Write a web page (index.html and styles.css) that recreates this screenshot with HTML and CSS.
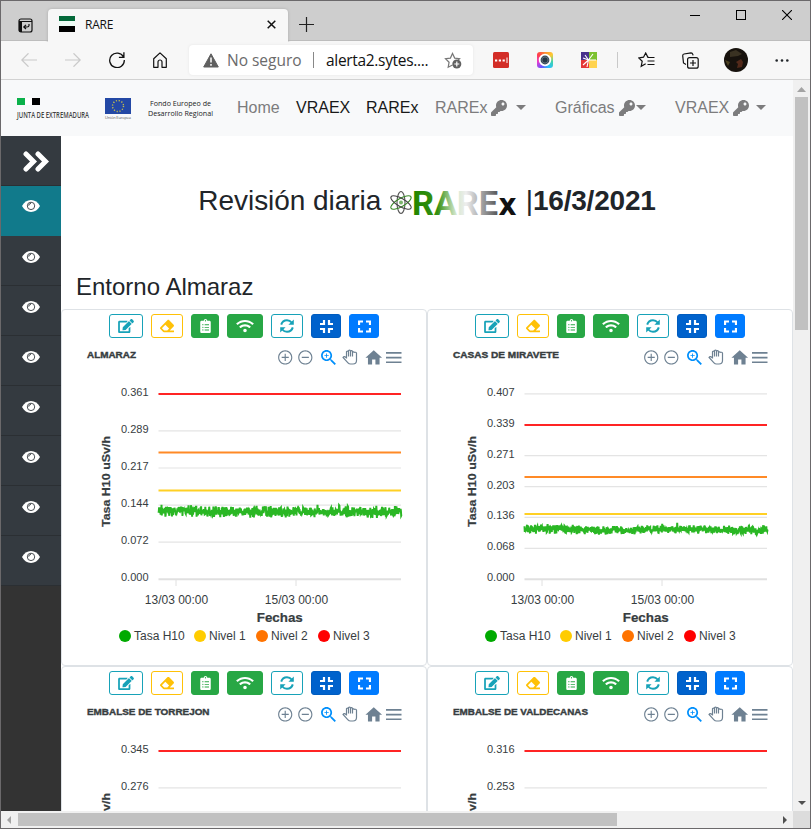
FILE: index.html
```html
<!DOCTYPE html>
<html lang="es">
<head>
<meta charset="utf-8">
<title>RARE</title>
<link rel="stylesheet" href="styles.css">
</head>
<body>
<svg class="defs" aria-hidden="true">
  <symbol id="key" viewBox="0 0 512 512"><path d="M512 176.001C512 273.203 433.202 352 336 352c-11.22 0-22.19-1.062-32.827-3.069l-24.012 27.014A23.999 23.999 0 0 1 261.223 384H224v40c0 13.255-10.745 24-24 24h-40v40c0 13.255-10.745 24-24 24H24c-13.255 0-24-10.745-24-24v-78.059c0-6.365 2.529-12.47 7.029-16.971l161.802-161.802C163.108 213.814 160 195.271 160 176 160 78.798 238.797.001 335.999 0 433.488-.001 512 78.511 512 176.001zM336 128c0 26.51 21.49 48 48 48s48-21.49 48-48-21.49-48-48-48-48 21.49-48 48z"/></symbol>
  <symbol id="eye" viewBox="0 0 18 12"><path d="M0 6C2 2.2 5.3 0 9 0s7 2.2 9 6c-2 3.800-5.300 6-9 6S2 9.800 0 6z"/><circle cx="9" cy="5.900" r="3.700" fill="none" class="iris"/><path d="M6.700 5.700A2.300 2.300 0 0 1 9 3.400" fill="none" class="iris"/></symbol>
  <symbol id="edit" viewBox="0 0 576 512"><path d="M402.6 83.2l90.2 90.2c3.8 3.8 3.8 10 0 13.8L274.4 405.6l-92.8 10.3c-12.4 1.4-22.9-9.1-21.5-21.5l10.3-92.8L388.8 83.2c3.8-3.8 10-3.8 13.8 0zm162-22.9l-48.8-48.8c-15.2-15.2-39.9-15.2-55.2 0l-35.4 35.4c-3.8 3.8-3.8 10 0 13.8l90.2 90.2c3.8 3.8 10 3.8 13.8 0l35.4-35.4c15.2-15.3 15.2-40 0-55.2zM384 346.2V448H64V128h229.8c3.2 0 6.2-1.3 8.500-3.500l40-40c7.600-7.600 2.200-20.500-8.500-20.500H48C21.500 64 0 85.500 0 112v352c0 26.500 21.500 48 48 48h352c26.500 0 48-21.500 48-48V306.200c0-10.700-12.900-16-20.500-8.500l-40 40c-2.200 2.300-3.500 5.300-3.500 8.500z"/></symbol>
  <symbol id="eraser" viewBox="0 0 512 512"><path d="M497.941 273.941c18.745-18.745 18.745-49.137 0-67.882l-160-160c-18.745-18.745-49.136-18.746-67.883 0l-256 256c-18.745 18.745-18.745 49.137 0 67.882l96 96A48.004 48.004 0 0 0 144 480h356c6.627 0 12-5.373 12-12v-40c0-6.627-5.373-12-12-12H355.883l142.058-142.059zm-302.627-62.627l137.373 137.373L265.373 416H150.628l-80-80 124.686-124.686z"/></symbol>
  <symbol id="clip" viewBox="0 0 384 512"><path d="M336 64h-80c0-35.3-28.7-64-64-64s-64 28.700-64 64H48C21.500 64 0 85.500 0 112v352c0 26.500 21.500 48 48 48h288c26.500 0 48-21.500 48-48V112c0-26.500-21.500-48-48-48zM96 424c-13.300 0-24-10.700-24-24s10.700-24 24-24 24 10.700 24 24-10.700 24-24 24zm0-96c-13.300 0-24-10.700-24-24s10.700-24 24-24 24 10.700 24 24-10.700 24-24 24zm0-96c-13.300 0-24-10.700-24-24s10.700-24 24-24 24 10.700 24 24-10.700 24-24 24zm96-192c13.300 0 24 10.700 24 24s-10.700 24-24 24-24-10.700-24-24 10.700-24 24-24zm128 368c0 4.400-3.600 8-8 8H168c-4.400 0-8-3.600-8-8v-16c0-4.400 3.600-8 8-8h144c4.400 0 8 3.600 8 8v16zm0-96c0 4.400-3.600 8-8 8H168c-4.400 0-8-3.600-8-8v-16c0-4.400 3.600-8 8-8h144c4.400 0 8 3.600 8 8v16zm0-96c0 4.400-3.600 8-8 8H168c-4.400 0-8-3.600-8-8v-16c0-4.400 3.600-8 8-8h144c4.400 0 8 3.600 8 8v16z"/></symbol>
  <symbol id="wifi" viewBox="0 0 640 512"><path d="M634.91 154.88C457.74-8.99 182.19-8.93 5.09 154.88c-6.66 6.16-6.79 16.59-.35 22.98l34.24 33.97c6.14 6.1 16.02 6.23 22.4.38 145.92-133.68 371.3-133.71 517.25 0 6.38 5.85 16.26 5.71 22.4-.38l34.24-33.97c6.43-6.39 6.3-16.82-.36-22.98zM320 352c-35.35 0-64 28.65-64 64s28.65 64 64 64 64-28.65 64-64-28.65-64-64-64zm202.67-83.59c-115.26-101.93-290.21-101.82-405.34 0-6.9 6.1-7.12 16.69-.57 23.15l34.44 33.99c6 5.92 15.66 6.32 22.05.8 83.95-72.57 209.74-72.41 293.49 0 6.39 5.52 16.05 5.13 22.05-.8l34.44-33.99c6.56-6.46 6.33-17.06-.56-23.15z"/></symbol>
  <symbol id="sync" viewBox="0 0 14 14"><path d="M1.200 5.600C2 2.900 4.300 1.200 7 1.200c2 0 3.500.8 4.700 2.300M12.800 8.400C12 11.100 9.700 12.800 7 12.800c-2 0-3.500-.8-4.700-2.300" fill="none" stroke="currentColor" stroke-width="2"/><path d="M13.800.4v5.400H8.400zM.2 13.600V8.200h5.400z"/></symbol>
  <symbol id="compress" viewBox="0 0 13 13"><path d="M4 0v4H0M9 0v4h4M4 13V9H0M9 13V9h4" fill="none" stroke="currentColor" stroke-width="2.200"/></symbol>
  <symbol id="expand" viewBox="0 0 13 13"><path d="M1 5V1.500h4M8 1.500h4V5M1 8v3.500h4M12 8v3.500H8" fill="none" stroke="currentColor" stroke-width="2.200"/></symbol>
</svg>

<div class="window">
  <header class="titlebar">
    <div class="tabactions"><svg width="15" height="15" viewBox="0 0 15 15"><rect x="1" y="1" width="13" height="13" rx="2" fill="none" stroke="#111" stroke-width="1.200"/><path d="M1 3.500h13" stroke="#111" fill="none"/><path d="M1 3h3v11H2L1 13z" fill="#111"/><path d="M11 6v1.500Q11 9 9 9H6M8 6.800L5.800 9 8 11" fill="none" stroke="#111" stroke-width="1.200"/></svg></div>
    <div class="tab">
      <span class="favicon"></span><span class="tabname">RARE</span>
      <svg width="9" height="9" viewBox="0 0 9 9"><path d="M.7.7l7.600 7.600M8.300.7L.7 8.300" stroke="#111" stroke-width="1.500"/></svg>
    </div>
    <svg class="newtab" width="15" height="15" viewBox="0 0 15 15"><path d="M7.500 0v15M0 7.500h15" stroke="#222" stroke-width="1.200"/></svg>
    <div class="winctl">
      <svg width="10" height="10"><path d="M0 5.500h10" stroke="#000"/></svg>
      <svg width="10" height="10"><rect x=".5" y=".5" width="9" height="9" fill="none" stroke="#000"/></svg>
      <svg width="10" height="10"><path d="M0 0l10 10M10 0L0 10" stroke="#000" stroke-width="1.100"/></svg>
    </div>
  </header>

  <div class="toolbar">
    <div class="navicons">
      <svg width="16" height="14" viewBox="0 0 16 14" stroke="#c9c9c9"><path d="M16 7H.8M7.500.3L.8 7l6.700 6.700" fill="none" stroke-width="1.200"/></svg>
      <svg width="16" height="14" viewBox="0 0 16 14" stroke="#c9c9c9"><path d="M0 7h15.200M8.500.3L15.200 7l-6.700 6.700" fill="none" stroke-width="1.200"/></svg>
      <svg width="16" height="16" viewBox="0 0 16 16"><path d="M14.500 5A7.300 7.300 0 1 0 15.300 8M14.900.3v5h-5" fill="none" stroke="#111" stroke-width="1.300"/></svg>
      <svg width="14" height="16" viewBox="0 0 14 16"><path d="M.7 6.800L7 .9l6.300 5.900v8.500H9V10a2 2 0 0 0-4 0v5.300H.7z" fill="none" stroke="#111" stroke-width="1.200" stroke-linejoin="round"/></svg>
    </div>
    <div class="address">
      <svg width="16" height="15" viewBox="0 0 16 15"><path d="M8 .8L15.300 14H.7z" fill="#606060" stroke="#606060" stroke-linejoin="round"/><path d="M8 4.500v5M8 11v1.700" stroke="#fff" stroke-width="1.500"/></svg>
      <span class="nosec">No seguro</span><span class="vbar"></span><span class="url">alerta2.sytes....</span>
      <svg class="fav" width="18" height="17" viewBox="0 0 18 17"><path d="M8.500 13L4.200 15.200l.9-5L1.500 6.700l4.900-.6L8.500 1.500l2.200 4.600 4.900.6-1.500 1.500" fill="none" stroke="#777" stroke-width="1.200"/><circle cx="12.800" cy="12" r="4.500" fill="#606060"/><path d="M12.800 9.500v5M10.300 12h5" stroke="#fff" stroke-width="1.200"/></svg>
    </div>
    <svg class="ext" width="16" height="16"><rect width="16" height="16" rx="1.500" fill="#d32d27"/><path d="M2 8.500h2.200M5.800 8.500H8M9.600 8.500h2.200" stroke="#fff" stroke-width="2.200"/><path d="M14 5.500v5.500" stroke="#fff"/></svg>
    <div class="ext rainbow"><svg width="16" height="16"><circle cx="8" cy="8" r="5.300" fill="#394a59" stroke="#fff" stroke-width="1.800"/><circle cx="8" cy="8" r="3" fill="#263746" stroke="#71808c" stroke-width=".7"/></svg></div>
    <svg class="ext" width="16" height="16"><path d="M0 0h8v8H0z" fill="#47308b"/><path d="M8 0h8v8H8z" fill="#7cc230"/><path d="M0 8h8v8H0z" fill="#e53837"/><path d="M8 8h8v8H8z" fill="#ffd34f"/><path d="M7.500 8L2 6M7.500 8L4 3M7.500 8L12 2M7.500 8H15M7.500 8L6 15M7.500 8L2 13" stroke="#fff" stroke-width="1.100"/></svg>
    <span class="sep"></span>
    <svg class="favs" width="17" height="16" viewBox="0 0 17 16"><path d="M10.500 5.200L9.800 5.100 7.700 1 5.500 5.200l-4.700.7 3.400 3.400-1 5 4.500-2.500M9.500 5.500h7M9.500 9h7M9.500 12.500h7" fill="none" stroke="#111" stroke-width="1.200"/></svg>
    <svg class="coll" width="17" height="17" viewBox="0 0 17 17"><path d="M4 12.500L1.500 11 .7 3.700Q.7 2.200 2 2L9 .8q1.400 0 1.800 1.500l.3 1" fill="none" stroke="#111" stroke-width="1.200"/><rect x="5.600" y="5.600" width="10.600" height="10.600" rx="2" fill="none" stroke="#111" stroke-width="1.200"/><path d="M11 8v6M8 11h6" stroke="#111" stroke-width="1.200"/></svg>
    <svg class="avatar" width="24" height="24" viewBox="0 0 24 24"><defs><clipPath id="av"><circle cx="12" cy="12" r="12"/></clipPath></defs><g clip-path="url(#av)"><path d="M0 0h24v24H0z" fill="#17120d"/><path d="M6 4l6-2 6 4-4 2-8 1z" fill="#3a3222"/><path d="M12 14l5-3 2 3-1 5-5 1 1-4z" fill="#52291a"/><path d="M1 12l5 2-2 4z" fill="#4b4020"/></g></svg>
    <svg class="more" width="14" height="3"><circle cx="1.700" cy="1.500" r="1.300"/><circle cx="7" cy="1.500" r="1.300"/><circle cx="12.300" cy="1.500" r="1.300"/></svg>
  </div>

  <div class="viewport">
    <div class="page">
      <nav class="navbar">
        <svg class="brand" width="215" height="56" viewBox="0 0 215 56">
          <path d="M16 18h8v7h-8z" fill="#0bb14a"/><path d="M31 18h8v7h-8z" fill="#000"/><path d="M24 18h7v7h-7z" fill="#fff"/>
          <text x="16" y="38" font-family="Open Sans" font-size="9" font-weight="600" fill="#444" textLength="72" lengthAdjust="spacingAndGlyphs">JUNTA DE EXTREMADURA</text>
          <path d="M104 18h26v16h-26z" fill="#2348a5"/>
          <circle cx="117" cy="26" r="5.500" fill="none" stroke="#c5bd4d" stroke-width="1.400" stroke-dasharray="1.200 1.680"/>
          <text x="104" y="38.500" font-family="Open Sans" font-size="4" fill="#555" textLength="26">Unión Europea</text>
          <text x="149" y="26" font-family="Open Sans" font-size="7.500" fill="#222" textLength="61" lengthAdjust="spacingAndGlyphs">Fondo Europeo de</text>
          <text x="147" y="35.500" font-family="Open Sans" font-size="7.500" fill="#222" textLength="65" lengthAdjust="spacingAndGlyphs">Desarrollo Regional</text>
        </svg>
        <span class="link home">Home</span>
        <span class="link on vraex">VRAEX</span>
        <span class="link on rarex">RAREx</span>
        <span class="link drop d1">RAREx <svg width="16" height="16"><use href="#key"/></svg><i></i></span>
        <span class="link drop d2">Gráficas <svg width="16" height="16"><use href="#key"/></svg><i></i></span>
        <span class="link drop d3">VRAEX <svg width="16" height="16"><use href="#key"/></svg><i></i></span>
      </nav>
      <div class="body">
        <aside class="side">
          <div class="item toggle"><svg width="27" height="21" viewBox="0 0 27 21"><path d="M3 3l7.500 7.500L3 18M15 3l7.500 7.500L15 18" fill="none" stroke="#fff" stroke-width="5" stroke-linecap="round" stroke-linejoin="miter"/></svg></div>
          <div class="item active"><svg width="18" height="12"><use href="#eye"/></svg></div>
          <div class="item"><svg width="18" height="12"><use href="#eye"/></svg></div>
          <div class="item"><svg width="18" height="12"><use href="#eye"/></svg></div>
          <div class="item"><svg width="18" height="12"><use href="#eye"/></svg></div>
          <div class="item"><svg width="18" height="12"><use href="#eye"/></svg></div>
          <div class="item"><svg width="18" height="12"><use href="#eye"/></svg></div>
          <div class="item"><svg width="18" height="12"><use href="#eye"/></svg></div>
          <div class="item"><svg width="18" height="12"><use href="#eye"/></svg></div>
        </aside>
        <main class="main">
          <h1>Revisión diaria
            <svg class="logo" width="129" height="26" viewBox="0 0 129 26">
              <defs><linearGradient id="rg" gradientUnits="userSpaceOnUse" x1="25" x2="109" y1="0" y2="0"><stop offset="0" stop-color="#238600"/><stop offset=".28" stop-color="#349014"/><stop offset=".5" stop-color="#d5e8cf"/><stop offset=".62" stop-color="#eee"/><stop offset="1" stop-color="#555"/></linearGradient></defs>
              <g fill="none" stroke-width="1.100"><ellipse cx="12" cy="12.500" rx="4" ry="11" stroke="#555"/><ellipse cx="12" cy="12.500" rx="4" ry="11.500" transform="rotate(60 12 12.500)" stroke="#3a8a28"/><ellipse cx="12" cy="12.500" rx="4" ry="11.500" transform="rotate(-60 12 12.500)" stroke="#444"/></g><circle cx="12" cy="12.500" r="2" fill="#7ab56c"/>
              <text x="23" y="25" font-family="Roboto" font-size="32.500" font-weight="bold" fill="url(#rg)" textLength="86" lengthAdjust="spacingAndGlyphs">RARE</text>
              <text x="109.500" y="25" font-family="DejaVu Sans" font-size="30" font-weight="bold" fill="#111" textLength="18" lengthAdjust="spacingAndGlyphs">x</text>
            </svg>
            |<b>16/3/2021</b></h1>
          <h2>Entorno Almaraz</h2>
          <div class="cards" id="cards"></div>
        </main>
      </div>
    </div>
    <div class="vscroll"><svg width="9" height="5"><path d="M0 5l4.500-5L9 5z" fill="#a3a3a3"/></svg><span></span><svg width="8" height="4"><path d="M0 0l4 4 4-4z" fill="#505050"/></svg></div>
  </div>
  <div class="hscroll"><svg width="4" height="8"><path d="M4 0L0 4l4 4z" fill="#a3a3a3"/></svg><span></span><svg width="4" height="8"><path d="M0 0l4 4-4 4z" fill="#505050"/></svg><em></em></div>
</div>
<script src="charts.js"></script>
</body>
</html>
```
FILE: styles.css
```css
* { box-sizing: border-box; }
body { margin: 0; font-family: "Liberation Sans", Arial, sans-serif; color: #212529; overflow: hidden; }
svg { display: block; flex: none; fill: currentColor; }
.defs { display: none; }
.window { width: 811px; height: 829px; border: 1px solid #6b696b; display: flex; flex-direction: column; overflow: hidden; }

.titlebar { height: 40px; flex: none; background: #cecece; display: flex; align-items: flex-start; border-bottom: 1px solid #bdbdbd; }
.tabactions { width: 47px; padding: 17px 0 0 17px; }
.tab { width: 240px; height: 40px; margin-top: 8px; padding: 0 12px 10px 11px; background: #f7f7f7; border-radius: 4px 4px 0 0; box-shadow: 0 0 3px #aaa; display: flex; align-items: center; clip-path: inset(-4px -4px 7px -4px); }
.favicon { width: 16px; height: 16px; background: linear-gradient(#04693a 0 5px, #edfbf5 5px 10px, #000 10px); }
.tabname { margin-left: 10px; flex: 1; font: 12px "Open Sans", sans-serif; letter-spacing: -.2px; color: #111; }
.newtab { margin: 16px 0 0 11px; }
.winctl { margin-left: auto; display: flex; gap: 36px; padding: 9px 18px 0 0; }

.toolbar { height: 39px; flex: none; background: #f7f7f7; border-bottom: 1px solid #d2d2d2; display: flex; align-items: center; }
.navicons { display: flex; align-items: center; width: 188px; padding-left: 20px; gap: 28px; }
.address { width: 284px; height: 30px; background: #fff; border-radius: 4px; box-shadow: 0 0 3px #e5e5e5; display: flex; align-items: center; padding-left: 14px; font: 15.500px "Open Sans", sans-serif; white-space: nowrap; }
.nosec { color: #6b6b6b; margin-left: 8px; width: 74px; letter-spacing: -.02px; }
.vbar { width: 1px; height: 16px; background: #888; margin: 0 12px; }
.url { color: #111; width: 104px; letter-spacing: -.32px; }
.fav { margin-left: 14px; }
.ext { margin-left: 28px; flex: none; }
.address + .ext { margin-left: 20px; }
.rainbow { border-radius: 3px; background: conic-gradient(#ff8a30, #ffc933, #41d3aa, #27bfff, #6954ff, #ec3ccb, #ff3f49, #ff8a30); }
.sep { width: 1px; height: 16px; background: #c9c9c9; margin: 0 20px; }
.coll { margin-left: 27px; }
.avatar { margin-left: 25px; }
.more { margin-left: 27px; }

.viewport { display: flex; height: 731px; flex: none; }
.page { width: 792px; height: 731px; overflow: hidden; background: #fff; }
.navbar { height: 56px; background: #f8f9fa; display: flex; align-items: center; font-size: 16px; color: #7c7c7d; white-space: nowrap; }
.brand { margin-right: 21px; }
.link { line-height: 24px; margin-top: -1px; }
.home { width: 59px; }
.vraex { width: 70px; }
.rarex { width: 69px; }
.on { color: #191919; }
.drop { display: flex; align-items: center; }
.drop svg { margin-left: 4px; }
.drop i { border: 5px solid transparent; border-top-color: #7c7c7d; border-bottom: 0; margin-left: 9px; }
.d1 { width: 120px; }
.d2 { width: 120px; }
.d2 i { margin-left: 1px; }
.d3 i { margin-left: 7px; }

.body { display: flex; height: 675px; }
.side { width: 60px; flex: none; background: #333; color: #fff; }
.item { height: 50px; background: #343a40; border-bottom: 1px solid #2b2f33; padding: 15px 0 0 21px; }
.toggle svg { margin-left: 1px; }
.active { background: #117a8b; border-color: #117a8b; padding-top: 14px; }
.iris { stroke: #343a40; stroke-width: .9; }
.active .iris { stroke: #117a8b; }
.main { width: 732px; flex: none; }
h1 { margin: 48px 0 0; height: 34px; line-height: 34px; font-size: 28px; font-weight: 400; text-align: center; white-space: nowrap; letter-spacing: -.05px; }
h1 b { letter-spacing: -.2px; }
.logo { display: inline-block; vertical-align: -6px; }
h2 { margin: 54px 0 0 15px; height: 37px; line-height: 29px; font-size: 24px; font-weight: 400; }
.cards { display: grid; grid-template-columns: 366px 366px; grid-auto-rows: 357px; }
.card { border: 1px solid #dee2e6; border-radius: 4px; padding-top: 4px; }
.buttons { display: flex; justify-content: center; gap: 8px; height: 24px; }
.btn { height: 24px; border-radius: 3px; border: 1px solid; display: flex; align-items: center; justify-content: center; }
.edit, .sync { color: #17a2b8; }
.edit { width: 34px; }
.sync { width: 32px; }
.eraser { width: 32px; color: #ffc107; }
.clip, .wifi { background: #28a745; border-color: #28a745; color: #fff; }
.clip { width: 28px; }
.wifi { width: 36px; }
.compress { width: 30px; background: #0062cc; border-color: #005cbf; color: #fff; }
.expand { width: 30px; background: #007bff; border-color: #007bff; color: #fff; }

.chart { font-family: "Liberation Sans", Arial, sans-serif; fill: #373d3f; }
.title { font-size: 9.500px; font-weight: 900; stroke: #373d3f; stroke-width: .4; }
.ylab { font-size: 11px; text-anchor: end; }
.xlab { font-size: 12px; text-anchor: middle; }
.axis { font-size: 12px; font-weight: 900; text-anchor: middle; stroke: #373d3f; stroke-width: .2; }
.rot { font-size: 11px; }
.leg { font-size: 12px; }
.grid { stroke: #e4e4e4; stroke-width: 1.200; }
.base { stroke: #e0e0e0; stroke-width: 2; }
.tools { fill: #6e8192; }
.tools .sel { fill: #008ffb; }

.vscroll { width: 17px; background: #f0f0f0; display: flex; flex-direction: column; align-items: center; padding: 7px 0 6px; }
.vscroll span { width: 13px; height: 233px; margin: 5px 0 auto; background: #c1c1c1; }
.hscroll { height: 17px; flex: none; background: #f0f0f0; display: flex; align-items: center; padding-left: 6px; }
.hscroll span { width: 599px; height: 13px; background: #c1c1c1; margin: 0 auto 0 7px; }
.hscroll em { width: 17px; height: 17px; background: #dcdcdc; margin-left: 6px; }
```
FILE: charts.js
```js
const stations = [
  { name: "ALMARAZ", w: 49, labels: ["0.361", "0.289", "0.217", "0.144", "0.072", "0.000"], red: 394, orange: 452.5, yellow: 490.5, green: 511.5, amp: 6.5 },
  { name: "CASAS DE MIRAVETE", w: 106, labels: ["0.407", "0.339", "0.271", "0.203", "0.136", "0.068", "0.000"], red: 425, orange: 477, yellow: 514, green: 529.5, amp: 5 },
  { name: "EMBALSE DE TORREJON", w: 122.5, labels: ["0.345", "0.276", "0.207", "0.138", "0.069", "0.000"], red: 394, orange: 458, yellow: 494, green: 511.5, amp: 6 },
  { name: "EMBALSE DE VALDECANAS", w: 135, labels: ["0.316", "0.253", "0.190", "0.126", "0.063", "0.000"], red: 394, orange: 458, yellow: 494, green: 511.5, amp: 6 }
];

const ring = "M12 2C6.480 2 2 6.480 2 12s4.480 10 10 10 10-4.480 10-10S17.520 2 12 2zm0 18.400c-4.600 0-8.400-3.800-8.400-8.400S7.400 3.600 12 3.600s8.400 3.800 8.400 8.400-3.800 8.400-8.400 8.400z";

const tools = `<g class="tools">
  <g transform="translate(276.700 348.900) scale(.71)"><path d="${ring}M12.800 7h-1.600v4.200H7v1.600h4.200V17h1.600v-4.200H17v-1.600h-4.200z"/></g>
  <g transform="translate(296.800 348.900) scale(.71)"><path d="${ring}M7 11.200h10v1.600H7z"/></g>
  <g class="sel" transform="translate(318.500 347.500) scale(.85)"><path d="M15.500 14h-.79l-.28-.27C15.410 12.590 16 11.110 16 9.500 16 5.910 13.090 3 9.500 3S3 5.910 3 9.500 5.910 16 9.500 16c1.610 0 3.090-.59 4.230-1.570l.27.28v.79l5 4.990L20.490 19l-4.990-5zm-6 0C7.010 14 5 11.990 5 9.500S7.010 5 9.500 5 14 7.010 14 9.500 11.990 14 9.500 14z"/><path d="M12 10h-2v2H9v-2H7V9h2V7h1v2h2v1z"/></g>
  <path d="M346.500 358.500v-6.800q1.100-1.200 2 0v-1q1-1.200 2 0v.4q1.100-1 2 .3v.8q1.300-.8 2 .5M348.500 351.500v5M350.500 351v5.500M352.500 352v4.500M354.500 352.500q1.600-.7 2 .6v7.400q0 3.500-3.500 3.500h-2.500q-1.500 0-2.500-1.200l-5-5.300q.8-1.300 2.200-.6l1.300 1.300" fill="none" stroke="#6e8192" stroke-width="1.200"/>
  <g transform="translate(363.800 347.800) scale(.83)"><path d="M10 20v-6h4v6h5v-8h3L12 3 2 12h3v8z"/></g>
  <path d="M386 352h15.500v1.700H386zm0 4.700h15.500v1.700H386zm0 4.700h15.500v1.700H386z"/>
</g>`;

function noise(seed, mid, amp) {
  let s = seed;
  const rnd = () => (s = (s * 16807) % 2147483647) / 2147483647;
  let d = "";
  for (let x = 158.5; x <= 402; x += 0.3) {
    const spike = rnd() < 0.025 ? 1.5 : 1;
    const drift = Math.sin(x / 22 + seed) * 0.6;
    const y = mid + drift + (rnd() + rnd() - 1) * amp * spike;
    d += (d ? "L" : "M") + x.toFixed(1) + " " + y.toFixed(1);
  }
  return d;
}

function chart(s, i) {
  const step = 185.5 / (s.labels.length - 1);
  const rows = s.labels.map((t, k) => {
    const y = 393.8 + k * step;
    const last = k === s.labels.length - 1;
    return `<path class="${last ? "base" : "grid"}" d="M158.500 ${y}H401"/><text class="ylab" x="148.500" y="${y + 2}">${t}</text>`;
  }).join("");
  const level = (y, c) => `<path d="M158.500 ${y}H401" stroke="${c}" stroke-width="2"/>`;
  const legend = [["Tasa H10", 125, "#0a0"], ["Nivel 1", 200, "#fc0"], ["Nivel 2", 262, "#ff7300"], ["Nivel 3", 324, "#f00"]]
    .map(([t, x, c]) => `<circle cx="${x}" cy="636" r="6" fill="${c}"/><text class="leg" x="${x + 9}" y="640">${t}</text>`).join("");
  return `<svg class="chart" width="364" height="327" viewBox="62 338 364 327">
    <text class="title" x="87" y="358" textLength="${s.w}" lengthAdjust="spacingAndGlyphs">${s.name}</text>${tools}${rows}
    <path d="M176 580v6M296 580v6" stroke="#e0e0e0"/>
    ${level(s.yellow, "#ffd024")}${level(s.orange, "#ff8a26")}${level(s.red, "#ff2424")}
    <path d="${noise(4100 + i * 9701, s.green, s.amp)}" fill="none" stroke="#2ab724" stroke-width="2"/>
    <text class="axis rot" transform="translate(110 481.500) rotate(-90)" textLength="91" lengthAdjust="spacingAndGlyphs">Tasa H10 uSv/h</text>
    <text class="xlab" x="176.500" y="604">13/03 00:00</text><text class="xlab" x="296.500" y="604">15/03 00:00</text>
    <text class="axis" x="279.800" y="622" textLength="46" lengthAdjust="spacingAndGlyphs">Fechas</text>${legend}</svg>`;
}

const icons = [["edit", 16, 14], ["eraser", 14, 14], ["clip", 11, 14], ["wifi", 18, 14], ["sync", 14, 14], ["compress", 13, 13], ["expand", 13, 13]];
const buttons = icons.map(([n, w, h]) => `<span class="btn ${n}"><svg width="${w}" height="${h}"><use href="#${n}"/></svg></span>`).join("");
document.getElementById("cards").innerHTML = stations
  .map((s, i) => `<section class="card"><div class="buttons">${buttons}</div>${chart(s, i)}</section>`).join("");
```
